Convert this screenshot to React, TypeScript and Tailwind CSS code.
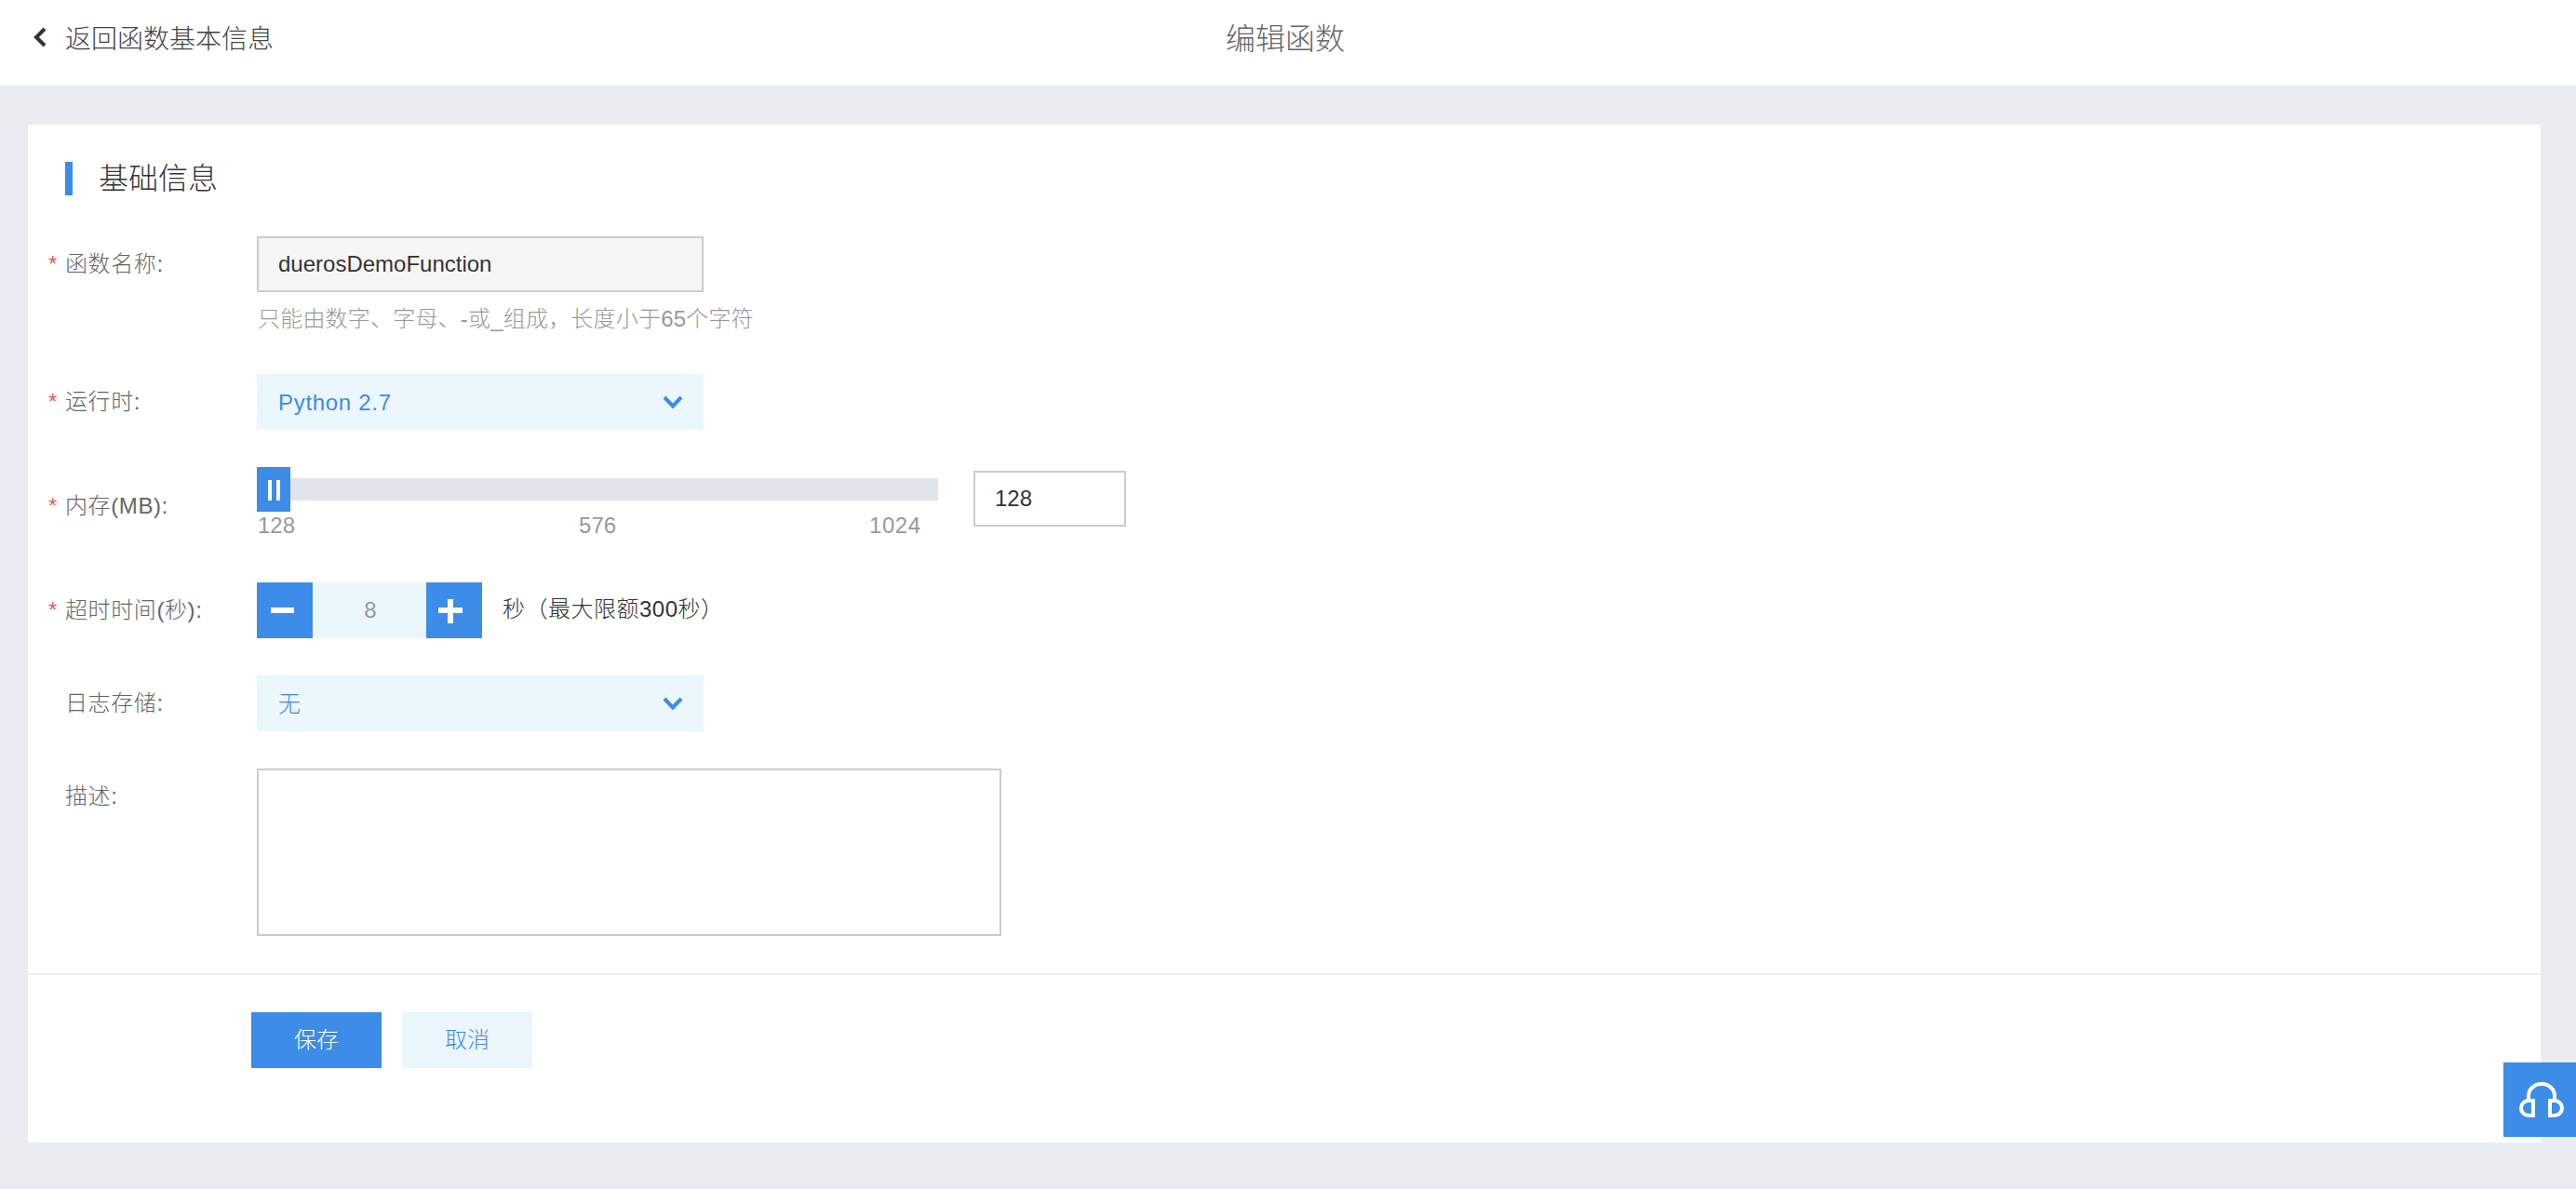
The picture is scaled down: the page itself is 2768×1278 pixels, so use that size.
import React from 'react'

const fontStack = "font-['Liberation_Sans','Noto_Sans_CJK_SC',sans-serif]"

const Chevron: React.FC = () => (
  <svg width="22" height="14" viewBox="0 0 22 14" fill="none" className="mr-[22px]">
    <path d="M2 2l9 9.5L20 2" stroke="#3c8ce8" strokeWidth="4" />
  </svg>
)

const Label: React.FC<{ text: string; required?: boolean; className?: string }> = ({ text, required, className }) => (
  <div className={`flex w-[246px] shrink-0 text-2xl leading-9 text-[#666] font-light ${className ?? ''}`}>
    <span className="w-[40px] pl-[22px] text-[#e55d5d]">{required ? '*' : ''}</span>
    <span className="tracking-[0.6px]">{text}</span>
  </div>
)

const SelectBox: React.FC<{ value: string }> = ({ value }) => (
  <div className="flex h-[60px] w-[480px] items-center justify-between bg-[#ebf6fd] pl-[23px] text-2xl tracking-[0.7px] text-[#3c8ce8] font-light">
    <span className="pt-[2px]">{value}</span>
    <Chevron />
  </div>
)

const HeadsetIcon: React.FC = () => (
  <svg width="48" height="38" viewBox="0 0 48 38" fill="none" stroke="white" strokeWidth="4" className="ml-[3px]">
    <path d="M10 20v-5a14 13 0 0 1 28 0v5" />
    <path d="M15 20v16h-5a8 8 0 0 1 0-16z" />
    <path d="M33 20v16h5a8 8 0 0 0 0-16z" />
  </svg>
)

export default function App() {
  return (
    <div className={`relative flex h-screen flex-col overflow-hidden bg-[#e9ecf1] ${fontStack}`}>
      <header className="relative flex h-[92px] shrink-0 items-center justify-center bg-white">
        <div className="absolute left-[36px] top-0 flex h-[84px] items-center gap-[20px] text-[28px] text-[#444] font-light">
          <svg width="14" height="22" viewBox="0 0 14 22" fill="none" className="mb-[4px]">
            <path d="M12 2L3 11l9 9" stroke="#333" strokeWidth="4" />
          </svg>
          <span className="pt-[2px]">返回函数基本信息</span>
        </div>
        <h1 className="mb-[8px] mr-[6px] text-[32px] text-[#666] font-light">编辑函数</h1>
      </header>

      <main className="ml-[30px] mr-[38px] mt-[42px] h-[1094px] bg-white">
        <div className="pt-[40px]">
          <div className="ml-[40px] flex h-[36px] items-center gap-[28px] text-[32px] text-[#333] font-light">
            <span className="h-[36px] w-[8px] bg-[#3c8ce8]" />
            <span>基础信息</span>
          </div>

          <div className="mt-[44px] flex">
            <Label text="函数名称:" required className="mt-[12px]" />
            <div>
              <div className="flex h-[60px] w-[480px] items-center border-2 border-[#ccc] bg-[#f6f6f6] pl-[21px] text-2xl text-[#333]">
                duerosDemoFunction
              </div>
              <p className="ml-[1px] mt-[14px] text-2xl leading-[30px] tracking-[0.2px] text-[#999] font-light">只能由数字、字母、-或_组成，长度小于65个字符</p>
            </div>
          </div>

          <div className="mt-[44px] flex">
            <Label text="运行时:" required className="mt-[12px]" />
            <SelectBox value="Python 2.7" />
          </div>

          <div className="mt-[40px] flex">
            <Label text="内存(MB):" required className="mt-[24px] tracking-[1px]" />
            <div className="w-[732px]">
              <div className="flex h-[48px] items-center">
                <div className="flex h-[48px] w-[36px] items-start justify-center gap-[5px] bg-[#3c8ce8] pt-[14px]">
                  <span className="h-[22px] w-[4px] bg-white" />
                  <span className="h-[22px] w-[4px] bg-white" />
                </div>
                <div className="h-[24px] flex-1 bg-[#e1e4ec]" />
              </div>
              <div className="mt-[1px] flex text-2xl leading-[28px] text-[#999] font-light">
                <span className="ml-[1px]">128</span>
                <span className="ml-[305px]">576</span>
                <span className="ml-[272px] tracking-[0.5px]">1024</span>
              </div>
            </div>
            <div className="ml-[38px] mt-[4px] flex h-[60px] w-[164px] items-center border-2 border-[#ccc] pl-[21px] text-2xl text-[#333]">
              128
            </div>
          </div>

          <div className="mt-[47px] flex">
            <Label text="超时时间(秒):" required className="mt-[12px]" />
            <div className="flex h-[60px] items-center">
              <button className="flex h-[60px] w-[60px] items-center justify-center bg-[#3c8ce8]">
                <span className="mr-[5px] h-[6px] w-[25px] bg-white" />
              </button>
              <div className="ml-[2px] flex h-[60px] w-[120px] items-center justify-center bg-[#ebf6fd] text-2xl text-[#999]">8</div>
              <button className="relative flex h-[60px] w-[60px] items-center justify-center bg-[#3c8ce8]">
                <span className="mr-[8px] h-[6px] w-[26px] bg-white" />
                <span className="absolute left-[23px] top-[18px] h-[26px] w-[6px] bg-white" />
              </button>
              <span className="mb-[3px] ml-[22px] text-2xl tracking-[0.5px] text-[#333] font-light">秒（最大限额300秒）</span>
            </div>
          </div>

          <div className="mt-[40px] flex">
            <Label text="日志存储:" className="mt-[12px]" />
            <SelectBox value="无" />
          </div>

          <div className="mt-[40px] flex">
            <Label text="描述:" className="mt-[12px]" />
            <textarea className="h-[180px] w-[800px] resize-none border-2 border-[#ccc] bg-white" />
          </div>
        </div>

        <div className="mt-[40px] h-[2px] bg-[#eeeeee]" />

        <div className="ml-[240px] mt-[40px] flex gap-[22px] text-2xl font-light">
          <button className="h-[60px] w-[140px] bg-[#3c8ce8] text-white">保存</button>
          <button className="h-[60px] w-[140px] bg-[#ebf6fd] text-[#3c8ce8]">取消</button>
        </div>
      </main>

      <button className="absolute right-0 top-[1142px] flex h-[80px] w-[78px] items-center justify-center bg-[#3c8ce8]">
        <HeadsetIcon />
      </button>
    </div>
  )
}
